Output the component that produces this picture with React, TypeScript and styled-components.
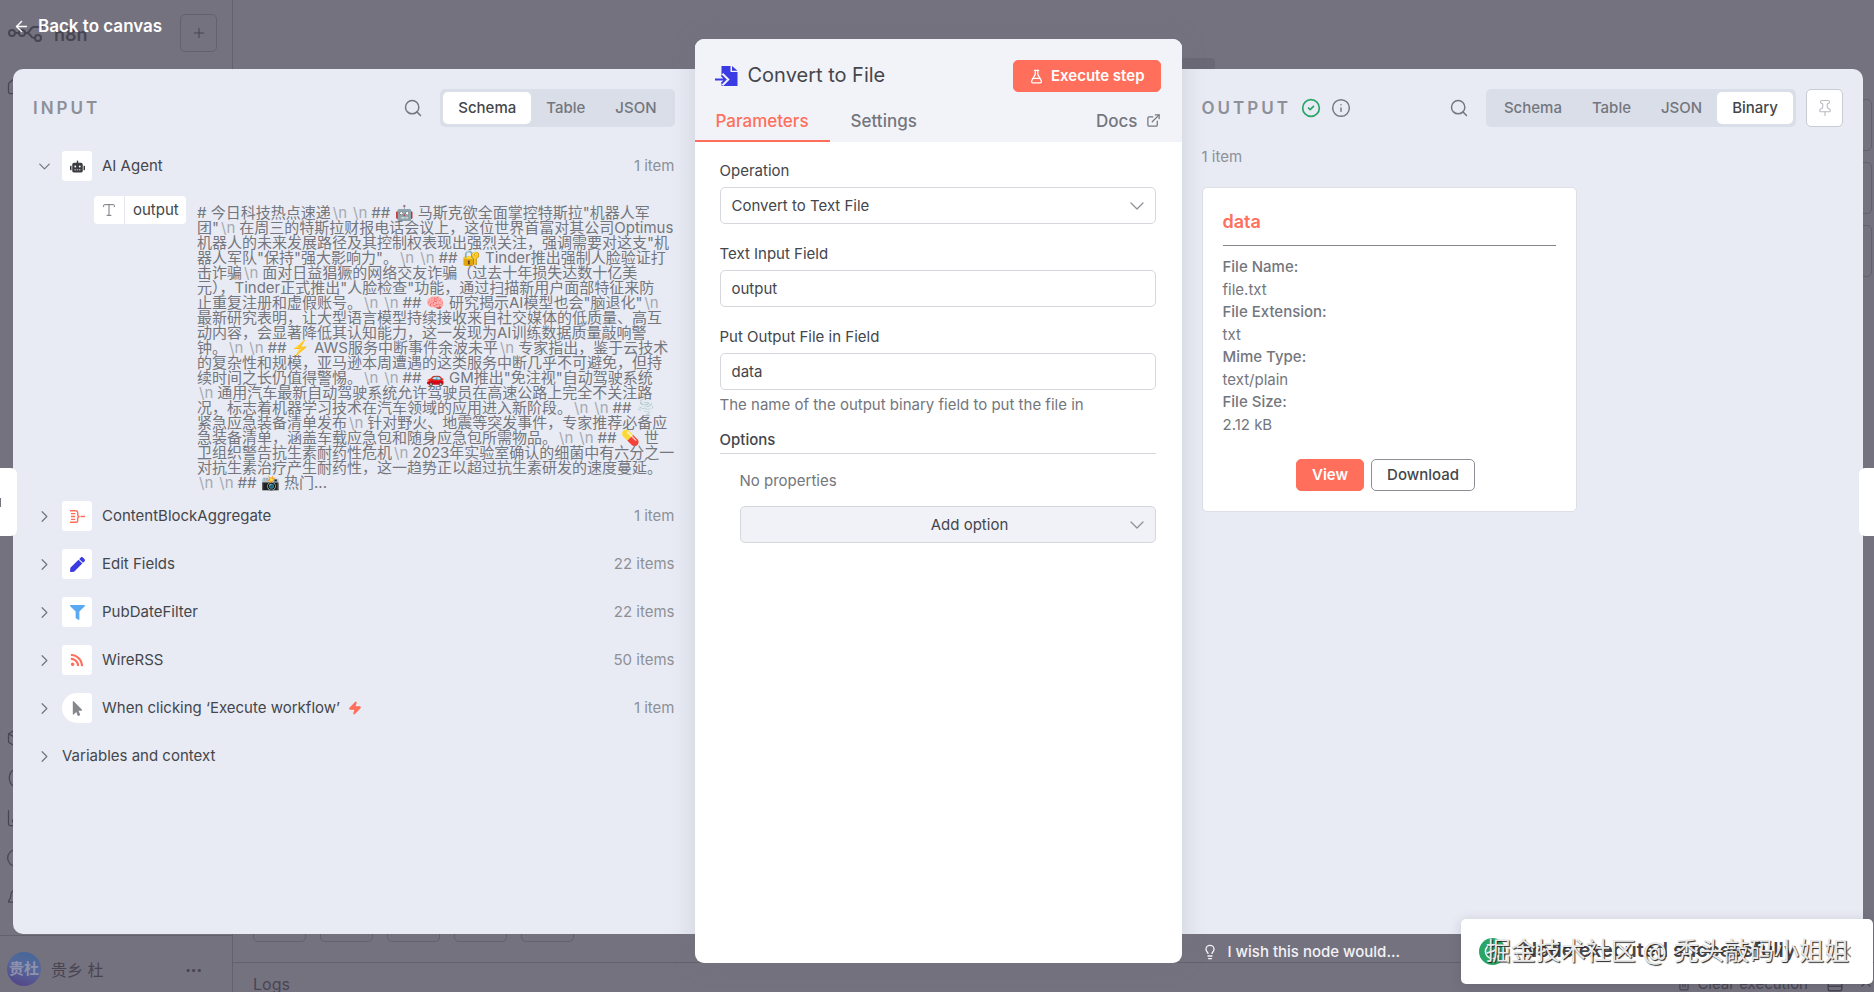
import React from 'react';
import styled, { createGlobalStyle, css } from 'styled-components';
import {
  ArrowLeft,
  Box,
  ChartColumn,
  ChevronDown,
  ChevronRight,
  ChevronUp,
  CircleCheck,
  CircleHelp,
  Bell,
  ExternalLink,
  FlaskConical,
  House,
  Info,
  Lightbulb,
  PanelBottom,
  Pin,
  Plus,
  Search,
  Trash2,
  Type,
  Variable,
  X,
  Zap,
} from 'lucide-react';
import { FaFilter, FaMousePointer, FaPen, FaRobot, FaRss } from 'react-icons/fa';

const color = {
  overlay: '#75727f',
  overlayDark: '#6a6875',
  overlayLine: '#64616f',
  overlayInk: '#484553',
  panel: '#e8ebf4',
  track: '#d9dee8',
  header: '#f2f3f9',
  primary: '#ff6f5c',
  ink: '#44464b',
  soft: '#74767d',
  muted: '#8e9098',
  faint: '#a6a9b2',
  line: '#d5d7dd',
  blue: '#3b3be4',
  green: '#29a568',
};

const GlobalStyle = createGlobalStyle`
  *, *::before, *::after { box-sizing: border-box; }
  body {
    margin: 0;
    background: ${color.overlay};
    font-family: Inter, "Noto Sans CJK SC", sans-serif;
    font-size: 15px;
    line-height: 22px;
    color: ${color.ink};
  }
  button, input, select { font: inherit; color: inherit; }
  svg { display: block; flex: none; }
`;

const Page = styled.div`
  position: relative;
  min-height: 100vh;
  overflow: hidden;
`;

/* ---------- dimmed editor behind the dialog ---------- */

const Backdrop = styled.div`
  position: absolute;
  inset: 0;
  display: grid;
  grid-template-columns: 233px 1fr;
  color: ${color.overlayInk};
`;

const Sidebar = styled.aside`
  display: flex;
  flex-direction: column;
  border-right: 1px solid ${color.overlayLine};
`;

const SidebarTop = styled.div`
  display: flex;
  align-items: center;
  gap: 8px;
  padding: 14px 15px 0 8px;
`;

const Brand = styled.span`
  flex: 1;
  padding-top: 4px;
  font-size: 18px;
  font-weight: 600;
`;

const OutlineButton = styled.button<{ $w?: number; $h?: number }>`
  display: flex;
  align-items: center;
  justify-content: center;
  width: ${p => p.$w ?? 37}px;
  height: ${p => p.$h ?? 38}px;
  padding: 0;
  border: 1px solid ${color.overlayLine};
  border-radius: 5px;
  background: none;
`;

const SidebarItem = styled.a`
  display: flex;
  align-items: center;
  height: 40px;
  padding-left: 6px;
  color: inherit;
`;

const SidebarNav = styled.nav<{ $grow?: boolean }>`
  padding: ${p => (p.$grow ? '14px 0 0' : '0 0 17px')};
  ${p => p.$grow && css`flex: 1;`}
`;

const UserBar = styled.div`
  display: flex;
  align-items: center;
  gap: 10px;
  height: 57px;
  padding: 9px 30px 0 7px;
  border-top: 1px solid ${color.overlayLine};
  font-size: 16px;
`;

const Avatar = styled.span`
  display: flex;
  align-items: center;
  justify-content: center;
  width: 34px;
  height: 34px;
  border-radius: 50%;
  background: linear-gradient(200deg, #47679a 10%, #56689a 45%, #54468a 90%);
  color: #8f92ac;
  font-size: 15px;
  font-weight: 700;
`;

const UserName = styled.span`
  flex: 1;
  padding-top: 3px;
`;

const Dots = styled.span`
  font-size: 10px;
`;

const Canvas = styled.div`
  display: flex;
  flex-direction: column;
  align-items: center;
  min-width: 0;
  padding-top: 58px;
`;

const ViewSwitch = styled.div`
  width: 322px;
  height: 36px;
  border-radius: 4px;
  background: ${color.overlayDark};
`;

const CanvasTools = styled.div`
  display: flex;
  flex-direction: column;
  flex: 1;
  gap: 11px;
  align-self: flex-end;
  padding: 5px 2px 0 0;
`;

const CanvasControls = styled.div`
  display: flex;
  gap: 14px;
  align-self: stretch;
  padding: 0 20px 20px;
`;

const LogsBar = styled.div`
  display: flex;
  align-items: center;
  gap: 14px;
  align-self: stretch;
  height: 30px;
  padding: 12px 0 0 20px;
  border-top: 1px solid ${color.overlayLine};
`;

const LogsTitle = styled.span`
  flex: 1;
  font-size: 16px;
`;

const LogsAction = styled.span`
  display: flex;
  align-items: center;
  gap: 6px;
  padding-right: 4px;
`;

/* ---------- dialog ---------- */

const Dialog = styled.div`
  position: relative;
  display: grid;
  grid-template-columns: 1fr 487px 1fr;
  min-height: 100vh;
  padding: 0 11px 0 13px;
`;

const BackLink = styled.a`
  position: absolute;
  top: 14px;
  left: 13px;
  display: flex;
  align-items: center;
  gap: 8px;
  color: #fff;
  font-size: 17px;
  font-weight: 600;
  line-height: 24px;
  text-decoration: none;
`;

const SideColumn = styled.div`
  display: flex;
  flex-direction: column;
  min-width: 0;
  padding-top: 69px;
`;

const SidePanel = styled.section<{ $side: 'left' | 'right' }>`
  flex: 1;
  min-width: 0;
  padding: 20px;
  background: ${color.panel};
  border-radius: ${p => (p.$side === 'left' ? '10px 0 0 10px' : '0 10px 10px 0')};
`;

const SideFooter = styled.div`
  display: flex;
  align-items: flex-start;
  height: 58px;
  padding: 7px 20px 0;
`;

const WishLink = styled.a`
  display: flex;
  align-items: center;
  gap: 10px;
  color: #f3f2f6;
  font-weight: 500;
  text-decoration: none;
`;

const PanelHeader = styled.header`
  display: flex;
  align-items: center;
  gap: 10px;
  height: 38px;
  color: ${color.soft};
`;

const PanelTitle = styled.h2`
  margin: 0;
  color: ${color.muted};
  font-size: 17px;
  font-weight: 600;
  letter-spacing: 3px;
`;

const Spacer = styled.span`
  flex: 1;
`;

const IconButton = styled.button`
  display: flex;
  margin: 0 7px 0 0;
  padding: 0;
  border: 0;
  background: none;
  color: ${color.soft};
`;

const PinButton = styled.button`
  display: flex;
  align-items: center;
  justify-content: center;
  width: 37px;
  height: 38px;
  padding: 0;
  border: 1px solid #c8cbd3;
  border-radius: 5px;
  background: #fff;
  color: #b9bbc2;
`;

const Segments = styled.div`
  display: flex;
  padding: 3px;
  border-radius: 5px;
  background: ${color.track};
`;

const Segment = styled.button<{ $active?: boolean }>`
  height: 32px;
  padding: 0 15px;
  border: 0;
  border-radius: 5px;
  background: ${p => (p.$active ? '#fff' : 'transparent')};
  color: ${p => (p.$active ? color.ink : color.soft)};
  font-weight: 500;
`;

const Tree = styled.div`
  padding-top: 15px;
`;

const TreeRow = styled.div`
  display: flex;
  align-items: center;
  height: 48px;
  padding-left: 2px;
`;

const Toggle = styled.button`
  display: flex;
  margin: 0 8px 0 0;
  padding: 0;
  border: 0;
  background: none;
  color: ${color.soft};
`;

const NodeIcon = styled.span<{ $trigger?: boolean }>`
  display: flex;
  align-items: center;
  justify-content: center;
  width: 30px;
  height: 30px;
  margin-right: 10px;
  border-radius: ${p => (p.$trigger ? '15px 3px 3px 15px' : '3px')};
  background: #fff;
`;

const NodeName = styled.span`
  display: flex;
  flex: 1;
  align-items: center;
  gap: 8px;
`;

const Count = styled.span`
  color: ${color.muted};
`;

const SchemaItem = styled.div`
  display: grid;
  grid-template-columns: 92px 1fr;
  gap: 11px;
  align-items: start;
  height: 302px;
  padding: 6px 0 0 61px;
`;

const Pill = styled.span`
  display: flex;
  align-items: center;
  height: 28px;
  border-radius: 4px;
  background: #fff;
`;

const PillType = styled.span`
  display: flex;
  align-items: center;
  justify-content: center;
  align-self: stretch;
  width: 31px;
  border-right: 1px solid #e6e8ee;
  color: ${color.soft};
`;

const PillName = styled.span`
  padding-left: 8px;
`;

const SchemaText = styled.div`
  padding-top: 9px;
  color: ${color.soft};
  line-height: 15px;
  white-space: nowrap;
`;

const TextLine = styled.div`
  height: 15px;
`;

const Escape = styled.span`
  margin: 0 4px 0 2px;
  color: ${color.faint};
`;

/* ---------- centre panel ---------- */

const MainPanel = styled.section`
  position: relative;
  display: flex;
  flex-direction: column;
  margin: 39px 0 29px;
  border-radius: 9px;
  background: #fff;
  box-shadow: 0 0 24px rgba(110, 112, 125, 0.22);
`;

const MainHeader = styled.header`
  padding-top: 20px;
  border-radius: 9px 9px 0 0;
  background: ${color.header};
`;

const TitleRow = styled.div`
  display: flex;
  align-items: center;
  gap: 10px;
  height: 34px;
  padding: 0 21px 0 20px;
`;

const Title = styled.h1`
  flex: 1;
  margin: 0;
  padding-bottom: 2px;
  font-size: 20px;
  font-weight: 400;
  line-height: 24px;
`;

const Button = styled.button<{ $kind: 'primary' | 'outline' }>`
  display: flex;
  align-items: center;
  gap: 7px;
  height: 32px;
  padding: 0 15px;
  border: 1px solid ${p => (p.$kind === 'primary' ? color.primary : '#8d8f95')};
  border-radius: 5px;
  background: ${p => (p.$kind === 'primary' ? color.primary : '#fff')};
  color: ${p => (p.$kind === 'primary' ? '#fff' : color.ink)};
  font-weight: ${p => (p.$kind === 'primary' ? 600 : 500)};
`;

const TabRow = styled.nav`
  display: flex;
  align-items: center;
  height: 49px;
  padding-right: 21px;
  color: ${color.soft};
  font-size: 17px;
  font-weight: 500;
`;

const Tab = styled.button<{ $active?: boolean }>`
  height: 49px;
  padding: 8px 21px 0;
  border: 0;
  border-bottom: 2px solid ${p => (p.$active ? color.primary : 'transparent')};
  background: none;
  color: ${p => (p.$active ? color.primary : 'inherit')};
`;

const DocsLink = styled.a`
  display: flex;
  align-items: center;
  gap: 8px;
  padding-top: 6px;
  color: inherit;
  text-decoration: none;
`;

const Form = styled.form`
  display: flex;
  flex-direction: column;
  padding: 18px 26px 0 25px;
`;

const Field = styled.div`
  display: flex;
  flex-direction: column;
  gap: 5px;
  margin-bottom: 19px;
`;

const Label = styled.label``;

const control = css`
  width: 100%;
  height: 37px;
  padding: 0 11px;
  border: 1px solid ${color.line};
  border-radius: 5px;
  background: #fff;
  outline: 0;
`;

const Input = styled.input`
  ${control}
`;

const SelectWrap = styled.div`
  position: relative;
  color: ${color.muted};

  svg {
    position: absolute;
    top: 7px;
    right: 7px;
    pointer-events: none;
  }
`;

const Select = styled.select<{ $filled?: boolean }>`
  ${control}
  appearance: none;
  color: ${color.ink};
  ${p => p.$filled && css`
    padding-left: 55px;
    background: #f1f2f8;
    text-align: center;
    text-align-last: center;
  `}
`;

const Hint = styled.p`
  margin: -15px 0 13px;
  color: ${color.soft};
`;

const SectionTitle = styled.h3`
  margin: 0;
  padding-bottom: 2px;
  border-bottom: 1px solid ${color.line};
  font-size: 15px;
  font-weight: 500;
  line-height: 22px;
`;

const OptionList = styled.div`
  display: flex;
  flex-direction: column;
  gap: 14px;
  padding: 16px 0 0 20px;
  color: ${color.soft};
`;

/* ---------- output ---------- */

const ItemCount = styled.p`
  margin: 19px 0;
  color: ${color.muted};
`;

const Card = styled.article`
  width: 375px;
  max-width: 100%;
  min-height: 324px;
  padding: 20px;
  border: 1px solid #dcdfe7;
  border-radius: 5px;
  background: #fff;
`;

const CardTitle = styled.h3`
  margin: 0 0 10px;
  padding: 0 0 10px;
  border-bottom: 1px solid #85878d;
  color: ${color.primary};
  font-size: 18px;
  font-weight: 600;
  line-height: 27px;
`;

const Facts = styled.dl`
  margin: 0 0 23px;
  color: ${color.soft};
`;

const Term = styled.dt`
  font-weight: 500;
  line-height: 22px;
`;

const Detail = styled.dd`
  margin: 0;
  line-height: 23px;
`;

const Actions = styled.div`
  display: flex;
  justify-content: center;
  gap: 7px;
  padding-right: 7px;
`;

/* ---------- things lying over the dialog ---------- */

const EdgeTab = styled.button<{ $side: 'left' | 'right' }>`
  position: absolute;
  top: 468px;
  ${p => p.$side}: 0;
  width: ${p => (p.$side === 'left' ? 17 : 15)}px;
  height: 68px;
  padding: 0;
  border: 0;
  border-radius: ${p => (p.$side === 'left' ? '0 6px 6px 0' : '6px 0 0 6px')};
  background: #fff;
`;

const EdgeMark = styled.span`
  display: block;
  width: 1px;
  height: 9px;
  background: ${color.soft};
`;

const Toast = styled.div`
  position: absolute;
  right: 1px;
  bottom: 8px;
  display: flex;
  align-items: center;
  gap: 16px;
  width: 412px;
  height: 65px;
  padding: 0 18px;
  border-radius: 5px;
  background: #fff;
  box-shadow: 0 2px 12px rgba(60, 58, 72, 0.2);
`;

const ToastMark = styled.span`
  display: flex;
  align-items: center;
  justify-content: center;
  width: 27px;
  height: 27px;
  border-radius: 50%;
  background: ${color.green};
  color: #fff;
`;

const ToastText = styled.strong`
  flex: 1;
  padding-bottom: 4px;
  font-size: 20px;
  font-weight: 600;
  white-space: nowrap;
`;

const Watermark = styled.span`
  position: absolute;
  right: 24px;
  top: 15px;
  color: #e9e9e9;
  font-size: 25px;
  line-height: 34px;
  white-space: nowrap;
  text-shadow: 1px 1px 1px #222;
`;

const BrandMark = () => (
  <svg width="38" height="18" viewBox="0 0 38 18" fill="none" stroke="currentColor" strokeWidth="2">
    <circle cx="4" cy="9" r="3" />
    <circle cx="14" cy="9" r="3" />
    <path d="M7 9h4M17 9h2c3 0 3-6 7-6h9M19 9c4 0 3 5 7 5h1" />
    <circle cx="30" cy="14" r="3" />
  </svg>
);

const FileImportIcon = () => (
  <svg width="23" height="20" viewBox="0 0 23 20">
    <path fill={color.blue} d="M6.5 0h9v6h7v14h-16z" />
    <path fill={color.blue} d="M17 0l5.5 4.8H17z" />
    <path fill="none" stroke={color.header} strokeWidth="4.4" d="M0 13.5h11M6.6 8.6l5 4.9-5 4.9" />
    <path fill="none" stroke={color.blue} strokeWidth="1.8" d="M0 13.5h10.4M6.4 9.4l4.2 4.1-4.2 4.1" />
  </svg>
);

const AggregateIcon = () => (
  <svg width="15" height="15" viewBox="0 0 16 16" fill="none" stroke={color.primary} strokeWidth="1.5">
    <path d="M0 1.8h6.2c1.6 0 2 .8 2 2v1.7c0 1.5.7 2.5 2 2.5-1.3 0-2 1-2 2.5v1.7c0 1.2-.4 2-2 2H0" />
    <path d="M1 4.9h4.6M1 8h4.6M1 11.1h4.6M11.2 8H16" />
  </svg>
);

const lines = [
  '# 今日科技热点速递\\n\\n## 🤖 马斯克欲全面掌控特斯拉"机器人军',
  '团"\\n在周三的特斯拉财报电话会议上，这位世界首富对其公司Optimus',
  '机器人的未来发展路径及其控制权表现出强烈关注，强调需要对这支"机',
  '器人军队"保持"强大影响力"。\\n\\n## 🔐 Tinder推出强制人脸验证打',
  '击诈骗\\n面对日益猖獗的网络交友诈骗（过去十年损失达数十亿美',
  '元），Tinder正式推出"人脸检查"功能，通过扫描新用户面部特征来防',
  '止重复注册和虚假账号。\\n\\n## 🧠 研究揭示AI模型也会"脑退化"\\n',
  '最新研究表明，让大型语言模型持续接收来自社交媒体的低质量、高互',
  '动内容，会显著降低其认知能力，这一发现为AI训练数据质量敲响警',
  '钟。\\n\\n## ⚡ AWS服务中断事件余波未平\\n专家指出，鉴于云技术',
  '的复杂性和规模，亚马逊本周遭遇的这类服务中断几乎不可避免，但持',
  '续时间之长仍值得警惕。\\n\\n## 🚗 GM推出"免注视"自动驾驶系统',
  '\\n通用汽车最新自动驾驶系统允许驾驶员在高速公路上完全不关注路',
  '况，标志着机器学习技术在汽车领域的应用进入新阶段。\\n\\n## 🌪️',
  '紧急应急装备清单发布\\n针对野火、地震等突发事件，专家推荐必备应',
  '急装备清单，涵盖车载应急包和随身应急包所需物品。\\n\\n## 💊 世',
  '卫组织警告抗生素耐药性危机\\n2023年实验室确认的细菌中有六分之一',
  '对抗生素治疗产生耐药性，这一趋势正以超过抗生素研发的速度蔓延。',
  '\\n\\n## 📸 热门...',
];

const SchemaLine = ({ text }: { text: string }) => (
  <TextLine>
    {text.split(/(\\n)/).map((part, i) => (part === '\\n' ? <Escape key={i}>{part}</Escape> : part))}
  </TextLine>
);

type NodeEntry = { name: string; count: string; icon: React.ReactNode; trigger?: boolean };

const nodes: NodeEntry[] = [
  { name: 'ContentBlockAggregate', count: '1 item', icon: <AggregateIcon /> },
  { name: 'Edit Fields', count: '22 items', icon: <FaPen size={15} color={color.blue} /> },
  { name: 'PubDateFilter', count: '22 items', icon: <FaFilter size={15} color="#5aa9f2" /> },
  { name: 'WireRSS', count: '50 items', icon: <FaRss size={14} color={color.primary} /> },
  {
    name: 'When clicking ‘Execute workflow’',
    count: '1 item',
    icon: <FaMousePointer size={15} color="#85878c" />,
    trigger: true,
  },
];

const facts = [
  ['File Name:', 'file.txt'],
  ['File Extension:', 'txt'],
  ['Mime Type:', 'text/plain'],
  ['File Size:', '2.12 kB'],
];

const Tabs = ({ items, active }: { items: string[]; active: string }) => (
  <Segments>
    {items.map(item => (
      <Segment key={item} type="button" $active={item === active}>
        {item}
      </Segment>
    ))}
  </Segments>
);

const Editor = () => (
  <Backdrop>
    <Sidebar>
      <SidebarTop>
        <BrandMark />
        <Brand>n8n</Brand>
        <OutlineButton type="button" aria-label="New">
          <Plus size={16} strokeWidth={1.5} />
        </OutlineButton>
      </SidebarTop>
      <SidebarNav $grow>
        <SidebarItem href="#home" aria-label="Home"><House size={20} strokeWidth={1.5} /></SidebarItem>
      </SidebarNav>
      <SidebarNav>
        <SidebarItem href="#templates" aria-label="Templates"><Box size={20} strokeWidth={1.5} /></SidebarItem>
        <SidebarItem href="#variables" aria-label="Variables"><Variable size={20} strokeWidth={1.5} /></SidebarItem>
        <SidebarItem href="#insights" aria-label="Insights"><ChartColumn size={20} strokeWidth={1.5} /></SidebarItem>
        <SidebarItem href="#help" aria-label="Help"><CircleHelp size={20} strokeWidth={1.5} /></SidebarItem>
        <SidebarItem href="#news" aria-label="News"><Bell size={20} strokeWidth={1.5} /></SidebarItem>
      </SidebarNav>
      <UserBar>
        <Avatar>贵杜</Avatar>
        <UserName>贵乡 杜</UserName>
        <Dots>•••</Dots>
      </UserBar>
    </Sidebar>
    <Canvas>
      <ViewSwitch />
      <CanvasTools>
        {['Add', 'Find', 'Note'].map(name => (
          <OutlineButton key={name} type="button" aria-label={name} $w={52} $h={52} />
        ))}
      </CanvasTools>
      <CanvasControls>
        {['Fit', 'Zoom in', 'Zoom out', 'Reset', 'Tidy'].map(name => (
          <OutlineButton key={name} type="button" aria-label={name} $w={53} $h={38} />
        ))}
      </CanvasControls>
      <LogsBar>
        <LogsTitle>Logs</LogsTitle>
        <LogsAction><Trash2 size={14} />Clear execution</LogsAction>
        <PanelBottom size={18} />
        <ChevronUp size={16} />
      </LogsBar>
    </Canvas>
  </Backdrop>
);

const InputPanel = () => (
  <SideColumn>
    <SidePanel $side="left">
      <PanelHeader>
        <PanelTitle>INPUT</PanelTitle>
        <Spacer />
        <IconButton type="button" aria-label="Search input"><Search size={20} strokeWidth={1.75} /></IconButton>
        <Tabs items={['Schema', 'Table', 'JSON']} active="Schema" />
      </PanelHeader>
      <Tree>
        <TreeRow>
          <Toggle type="button" aria-label="Collapse AI Agent"><ChevronDown size={19} strokeWidth={1.5} /></Toggle>
          <NodeIcon><FaRobot size={15} color="#3a3c40" /></NodeIcon>
          <NodeName>AI Agent</NodeName>
          <Count>1 item</Count>
        </TreeRow>
        <SchemaItem>
          <Pill>
            <PillType><Type size={16} strokeWidth={1.5} /></PillType>
            <PillName>output</PillName>
          </Pill>
          <SchemaText>
            {lines.map((text, i) => <SchemaLine key={i} text={text} />)}
          </SchemaText>
        </SchemaItem>
        {nodes.map(node => (
          <TreeRow key={node.name}>
            <Toggle type="button" aria-label={`Expand ${node.name}`}><ChevronRight size={19} strokeWidth={1.5} /></Toggle>
            <NodeIcon $trigger={node.trigger}>{node.icon}</NodeIcon>
            <NodeName>
              {node.name}
              {node.trigger && <Zap size={14} color={color.primary} fill={color.primary} />}
            </NodeName>
            <Count>{node.count}</Count>
          </TreeRow>
        ))}
        <TreeRow>
          <Toggle type="button" aria-label="Expand variables"><ChevronRight size={19} strokeWidth={1.5} /></Toggle>
          <NodeName>Variables and context</NodeName>
        </TreeRow>
      </Tree>
    </SidePanel>
    <SideFooter />
  </SideColumn>
);

const ParametersPanel = () => (
  <MainPanel>
    <MainHeader>
      <TitleRow>
        <FileImportIcon />
        <Title>Convert to File</Title>
        <Button type="button" $kind="primary">
          <FlaskConical size={15} />
          Execute step
        </Button>
      </TitleRow>
      <TabRow>
        <Tab type="button" $active>Parameters</Tab>
        <Tab type="button">Settings</Tab>
        <Spacer />
        <DocsLink href="#docs">
          Docs
          <ExternalLink size={15} />
        </DocsLink>
      </TabRow>
    </MainHeader>
    <Form>
      <Field>
        <Label htmlFor="operation">Operation</Label>
        <SelectWrap>
          <Select id="operation"><option>Convert to Text File</option></Select>
          <ChevronDown size={24} strokeWidth={1.25} />
        </SelectWrap>
      </Field>
      <Field>
        <Label htmlFor="text-field">Text Input Field</Label>
        <Input id="text-field" defaultValue="output" />
      </Field>
      <Field>
        <Label htmlFor="file-field">Put Output File in Field</Label>
        <Input id="file-field" defaultValue="data" />
      </Field>
      <Hint>The name of the output binary field to put the file in</Hint>
      <SectionTitle>Options</SectionTitle>
      <OptionList>
        No properties
        <SelectWrap>
          <Select $filled aria-label="Add option"><option>Add option</option></Select>
          <ChevronDown size={24} strokeWidth={1.25} />
        </SelectWrap>
      </OptionList>
    </Form>
  </MainPanel>
);

const OutputPanel = () => (
  <SideColumn>
    <SidePanel $side="right">
      <PanelHeader>
        <PanelTitle>OUTPUT</PanelTitle>
        <CircleCheck size={20} color={color.green} />
        <Info size={20} strokeWidth={1.75} />
        <Spacer />
        <IconButton type="button" aria-label="Search output"><Search size={20} strokeWidth={1.75} /></IconButton>
        <Tabs items={['Schema', 'Table', 'JSON', 'Binary']} active="Binary" />
        <PinButton type="button" aria-label="Pin data"><Pin size={18} strokeWidth={1.5} /></PinButton>
      </PanelHeader>
      <ItemCount>1 item</ItemCount>
      <Card>
        <CardTitle>data</CardTitle>
        <Facts>
          {facts.map(([term, detail]) => (
            <React.Fragment key={term}>
              <Term>{term}</Term>
              <Detail>{detail}</Detail>
            </React.Fragment>
          ))}
        </Facts>
        <Actions>
          <Button type="button" $kind="primary">View</Button>
          <Button type="button" $kind="outline">Download</Button>
        </Actions>
      </Card>
    </SidePanel>
    <SideFooter>
      <WishLink href="#feedback">
        <Lightbulb size={16} />
        I wish this node would...
      </WishLink>
    </SideFooter>
  </SideColumn>
);

export default function App() {
  return (
    <Page>
      <GlobalStyle />
      <Editor />
      <Dialog>
        <InputPanel />
        <ParametersPanel />
        <OutputPanel />
        <BackLink href="#canvas">
          <ArrowLeft size={17} />
          Back to canvas
        </BackLink>
      </Dialog>
      <EdgeTab $side="left" type="button" aria-label="Previous node"><EdgeMark /></EdgeTab>
      <EdgeTab $side="right" type="button" aria-label="Next node" />
      <Toast role="status">
        <ToastMark><CircleCheck size={17} /></ToastMark>
        <ToastText>Node executed successfully</ToastText>
        <X size={18} color={color.muted} />
        <Watermark>掘金技术社区 @ 秃头敲码小姐姐</Watermark>
      </Toast>
    </Page>
  );
}
